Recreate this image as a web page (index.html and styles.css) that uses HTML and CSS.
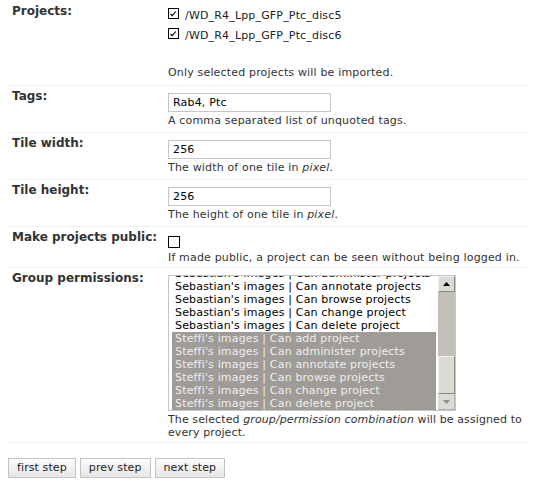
FILE: index.html
```html
<!DOCTYPE html>
<html>
<head>
<meta charset="utf-8">
<link rel="stylesheet" href="styles.css">
</head>
<body>
<div class="page">
<table class="wizard">
  <tr>
    <th>Projects:</th>
    <td>
      <ul class="checklist">
        <li><span class="cb"><svg width="11" height="11" viewBox="0 0 11 11"><rect x="0.5" y="0.5" width="10" height="10" fill="#fff" stroke="#000"/><path d="M2.5 6 L4.2 7.7 L7.8 3.5" fill="none" stroke="#000" stroke-width="1.1"/></svg></span>/WD_R4_Lpp_GFP_Ptc_disc5</li>
        <li><span class="cb"><svg width="11" height="11" viewBox="0 0 11 11"><rect x="0.5" y="0.5" width="10" height="10" fill="#fff" stroke="#000"/><path d="M2.5 6 L4.2 7.7 L7.8 3.5" fill="none" stroke="#000" stroke-width="1.1"/></svg></span>/WD_R4_Lpp_GFP_Ptc_disc6</li>
      </ul>
      <p class="help help-first">Only selected projects will be imported.</p>
    </td>
  </tr>
  <tr>
    <th>Tags:</th>
    <td>
      <input class="text" type="text" value="Rab4, Ptc">
      <p class="help help-gap">A comma separated list of unquoted tags.</p>
    </td>
  </tr>
  <tr>
    <th>Tile width:</th>
    <td>
      <input class="text" type="text" value="256">
      <p class="help help-gap">The width of one tile in <em>pixel</em>.</p>
    </td>
  </tr>
  <tr>
    <th>Tile height:</th>
    <td>
      <input class="text" type="text" value="256">
      <p class="help help-gap">The height of one tile in <em>pixel</em>.</p>
    </td>
  </tr>
  <tr>
    <th>Make projects public:</th>
    <td>
      <span class="cb cb-public"><svg width="12" height="12" viewBox="0 0 12 12"><rect x="0.5" y="0.5" width="11" height="11" fill="#fff" stroke="#000"/></svg></span>
      <p class="help">If made public, a project can be seen without being logged in.</p>
    </td>
  </tr>
  <tr>
    <th>Group permissions:</th>
    <td>
      <div class="listbox">
        <div class="opts">
          <ul class="optlist">
            <li>Sebastian's images | Can add project</li>
            <li>Sebastian's images | Can administer projects</li>
            <li>Sebastian's images | Can annotate projects</li>
            <li>Sebastian's images | Can browse projects</li>
            <li>Sebastian's images | Can change project</li>
            <li>Sebastian's images | Can delete project</li>
            <li class="sel">Steffi's images | Can add project</li>
            <li class="sel">Steffi's images | Can administer projects</li>
            <li class="sel">Steffi's images | Can annotate projects</li>
            <li class="sel">Steffi's images | Can browse projects</li>
            <li class="sel">Steffi's images | Can change project</li>
            <li class="sel">Steffi's images | Can delete project</li>
          </ul>
        </div>
        <div class="sb">
          <div class="sb-btn"><svg width="7" height="4" viewBox="0 0 7 4"><path d="M0 4 L3.5 0 L7 4 Z" fill="#000"/></svg></div>
          <div class="sb-track">
            <div class="sb-thumb"></div>
          </div>
          <div class="sb-btn sb-down"><svg width="7" height="4" viewBox="0 0 7 4"><path d="M0 0 L7 0 L3.5 4 Z" fill="#8e8d8a"/></svg></div>
        </div>
      </div>
      <p class="help help-tight">The selected <em>group/permission combination</em> will be assigned to every project.</p>
    </td>
  </tr>
</table>
<div class="actions">
  <button class="btn" type="button">first step</button>
  <button class="btn" type="button">prev step</button>
  <button class="btn" type="button">next step</button>
</div>
</div>
</body>
</html>
```

FILE: styles.css
```css
html, body {
  margin: 0;
  padding: 0;
  background: #fff;
}
body {
  font-family: "DejaVu Sans", sans-serif;
  font-size: 11px;
  letter-spacing: 0.17px;
  color: #333;
}
.page {
  padding: 1px 8px 0 8px;
}
.wizard {
  width: 519px;
  border-collapse: collapse;
}
.wizard tr {
  border-bottom: 1px solid #eeeeee;
}
.wizard th {
  width: 148px;
  padding: 3px 4px;
  text-align: left;
  vertical-align: top;
  font-size: 12px;
  line-height: 14px;
  letter-spacing: 0;
  font-weight: bold;
  color: #333;
}
.wizard td {
  padding: 3px 4px;
  vertical-align: top;
}
.checklist {
  list-style: none;
  margin: 2px 0 20px 0;
  padding: 0;
}
.checklist li {
  height: 20px;
  line-height: 20px;
  color: #222;
  white-space: nowrap;
}
.cb {
  display: inline-block;
  vertical-align: baseline;
  width: 11px;
  height: 11px;
  margin-right: 6px;
}
.cb svg {
  display: block;
}
.cb-public {
  display: block;
  width: 12px;
  height: 12px;
  margin: 6px 0 3px 0;
}
.help {
  margin: 0;
  line-height: 13px;
  color: #333;
}
.help-first {
  margin-bottom: 3px;
}
.help-gap {
  margin-bottom: 2px;
}
.help-tight {
  letter-spacing: 0.1px;
}
.text {
  display: block;
  box-sizing: border-box;
  width: 163px;
  height: 19px;
  margin: 4px 0 2px 0;
  padding: 0 4px;
  border: 1px solid #c6c6c6;
  font-family: "DejaVu Sans", sans-serif;
  font-size: 11px;
  letter-spacing: 0.17px;
  color: #000;
  background: #fff;
  outline: none;
}
.listbox {
  display: flex;
  box-sizing: border-box;
  width: 288px;
  height: 136px;
  margin: 4px 0 2px 0;
  border: 1px solid #c6c6c6;
  background: #fff;
}
.opts {
  flex: 1;
  overflow: hidden;
  padding: 0 2px 0 3px;
}
.optlist {
  list-style: none;
  margin: -22px 0 0 0;
  padding: 0;
}
.optlist li {
  height: 13px;
  line-height: 13px;
  padding: 0 3px;
  color: #000;
  white-space: nowrap;
}
.optlist li.sel {
  background: #9f9c97;
  color: #eeeeec;
}
.sb {
  width: 17px;
  display: flex;
  flex-direction: column;
  background: #c2bfb9;
}
.sb-btn {
  box-sizing: border-box;
  height: 16px;
  display: flex;
  align-items: center;
  justify-content: center;
  background: #dcdad5;
  border: 1px solid;
  border-color: #f4f3f1 #8a8985 #8a8985 #f4f3f1;
}
.sb-down {
  border-color: #dcdad5 #b5b3ae #b5b3ae #dcdad5;
}
.sb-track {
  flex: 1;
  display: flex;
  flex-direction: column;
  justify-content: flex-end;
}
.sb-thumb {
  box-sizing: border-box;
  height: 38px;
  background: #dcdad5;
  border: 1px solid;
  border-color: #f4f3f1 #8a8985 #8a8985 #f4f3f1;
}
.actions {
  display: flex;
  gap: 4px;
  padding-top: 15px;
}
.btn {
  box-sizing: border-box;
  height: 20px;
  margin: 0;
  padding: 0 8px;
  border: 1px solid #c4c4c4;
  border-radius: 0;
  background: linear-gradient(#fcfcfc, #e6e6e6);
  font-family: "DejaVu Sans", sans-serif;
  font-size: 11px;
  letter-spacing: 0.1px;
  color: #222;
  line-height: 18px;
}
```
